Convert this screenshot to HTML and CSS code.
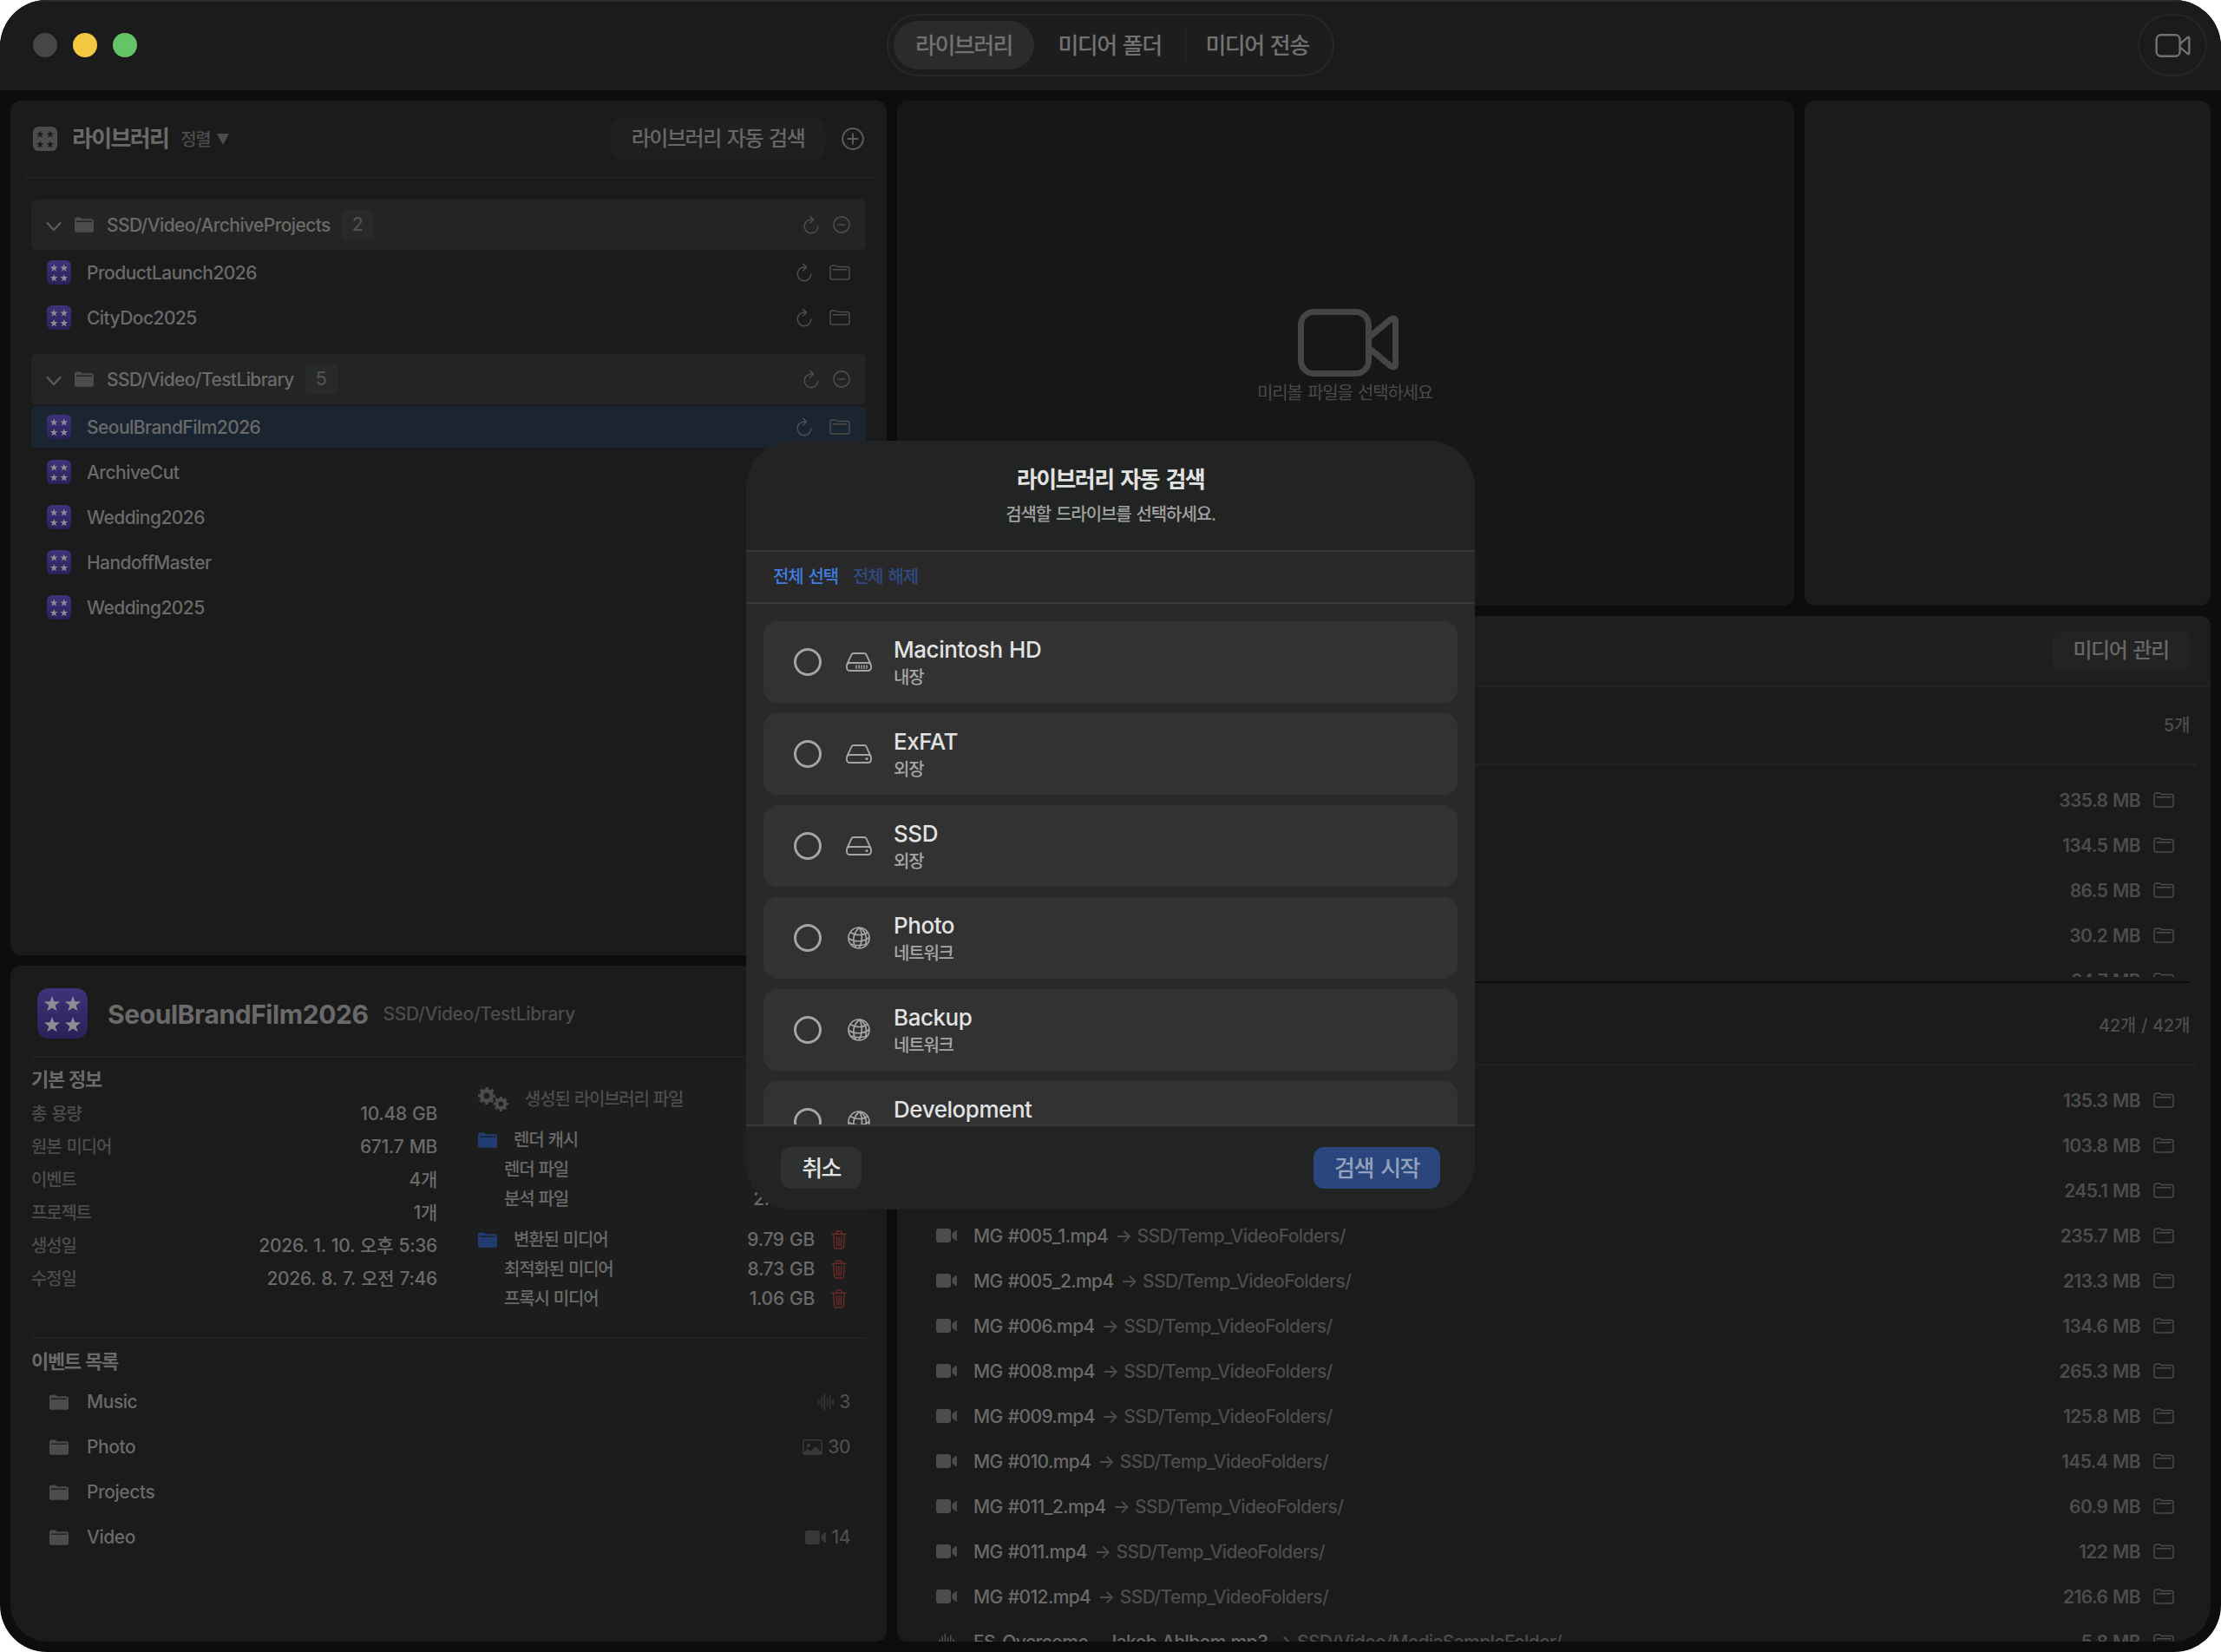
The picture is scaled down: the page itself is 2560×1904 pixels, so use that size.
FILE: index.html
```html
<!DOCTYPE html>
<html lang="ko">
<head>
    <meta charset="utf-8">
    <title>라이브러리</title>
    <link rel="stylesheet" href="styles.css">
</head>
<body>
    <svg class="sprite" aria-hidden="true">
        <linearGradient id="purple" x1="0" y1="0" x2="0" y2="1">
            <stop offset="0" stop-color="#40327a"/>
            <stop offset="1" stop-color="#2b2159"/>
        </linearGradient>
        <symbol id="star" viewBox="-10 -10 20 20">
            <path d="M0-9.5 2.29-3.16 9.04-2.94 3.71 1.21 5.58 7.69 0 3.9-5.58 7.69-3.71 1.21-9.04-2.94-2.29-3.16z"/>
        </symbol>
        <symbol id="library" viewBox="0 0 58 58">
            <rect class="tile" width="58" height="58" rx="13"/>
            <use href="#star" x="7" y="8.5" width="20" height="20"/>
            <use href="#star" x="31" y="8.5" width="20" height="20"/>
            <use href="#star" x="7" y="32.5" width="20" height="20"/>
            <use href="#star" x="31" y="32.5" width="20" height="20"/>
        </symbol>
        <symbol id="folder" viewBox="0 0 22 18">
            <path d="M0 3a2.6 2.6 0 0 1 2.6-2.6h4l2.2 1.8h10.600A2.600 2.600 0 0 1 22 4.800v10.400a2.600 2.600 0 0 1-2.600 2.600H2.600A2.600 2.600 0 0 1 0 15.200z" fill="currentColor"/>
            <path d="M2.500 5.200h17" stroke="#1b1b1b" stroke-width="1.300" stroke-linecap="round"/>
        </symbol>
        <symbol id="folder-line" viewBox="0 0 24 18">
            <path d="M1 3.400A2.400 2.400 0 0 1 3.400 1h4l2 1.600h11.200A2.400 2.400 0 0 1 23 5v9.600a2.400 2.400 0 0 1-2.400 2.400H3.400A2.400 2.400 0 0 1 1 14.600zM4 5.700h16" fill="none" stroke="currentColor" stroke-width="1.500" stroke-linecap="round"/>
        </symbol>
        <symbol id="refresh" viewBox="0 0 18 22">
            <path d="M10 5.100A7.800 7.800 0 1 0 16.800 13M7.600 1.200l3.900 3.900-3.900 3.900" fill="none" stroke="currentColor" stroke-width="1.600" stroke-linecap="round" stroke-linejoin="round"/>
        </symbol>
        <symbol id="minus" viewBox="0 0 20 20">
            <path d="M6 10h8" stroke="currentColor" stroke-width="1.600" stroke-linecap="round"/>
            <circle cx="10" cy="10" r="9.100" fill="none" stroke="currentColor" stroke-width="1.600"/>
        </symbol>
        <symbol id="plus" viewBox="0 0 26 26">
            <path d="M7.500 13h11M13 7.500v11" stroke="currentColor" stroke-width="2" stroke-linecap="round"/>
            <circle cx="13" cy="13" r="11.900" fill="none" stroke="currentColor" stroke-width="2"/>
        </symbol>
        <symbol id="chevron" viewBox="0 0 18 12">
            <path d="M1.500 2l7.500 8 7.500-8" fill="none" stroke="currentColor" stroke-width="2.200" stroke-linecap="round" stroke-linejoin="round"/>
        </symbol>
        <symbol id="camera-line" viewBox="0 0 116 78">
            <rect x="3.500" y="3.500" width="78" height="71" rx="15" fill="none" stroke="currentColor" stroke-width="7"/>
            <path d="M83 32l24-20q5-3 5.500 2v50q-.5 5-5.500 2L83 46" fill="none" stroke="currentColor" stroke-width="7" stroke-linejoin="round"/>
        </symbol>
        <symbol id="camera" viewBox="0 0 24 16">
            <rect width="17" height="16" rx="3" fill="currentColor"/>
            <path d="M18.500 5.500l4-3.300q1.500-.8 1.500.8v10q0 1.600-1.500.8l-4-3.300z" fill="currentColor"/>
        </symbol>
        <symbol id="wave" viewBox="0 0 18 20">
            <path d="M1 8v4M4.200 4.500v11M7.400 1v18M10.600 5.500v9M13.800 3v14M17 7.500v5" stroke="currentColor" stroke-width="1.500" stroke-linecap="round"/>
        </symbol>
        <symbol id="photo" viewBox="0 0 23 18">
            <rect x=".8" y=".8" width="21.400" height="16.400" rx="2.600" fill="none" stroke="currentColor" stroke-width="1.600"/>
            <circle cx="7" cy="7" r="2.200" fill="currentColor"/>
            <path d="M1 15l5-4 3.500 2.500 5.500-5.500 7.500 7v2H2z" fill="currentColor"/>
        </symbol>
        <symbol id="trash" viewBox="0 0 18 22">
            <path d="M1 4.200h16M6 4V2.200Q6 1 7.200 1h3.600Q12 1 12 2.200V4M2.700 4.500l.9 14.500q.2 2 2.200 2h6.400q2 0 2.200-2l.9-14.500M6.300 7.500l.4 10.500M9 7.500V18M11.700 7.500L11.300 18" fill="none" stroke="currentColor" stroke-width="1.400" stroke-linecap="round"/>
        </symbol>
        <symbol id="gears" viewBox="0 0 36 28">
            <g fill="none" stroke="currentColor">
                <circle cx="10" cy="10" r="5.700" stroke-width="4.600"/>
                <circle cx="10" cy="10" r="8.700" stroke-width="2.600" stroke-dasharray="3.416 3.416" stroke-dashoffset="1.708"/>
                <circle cx="26.300" cy="19.300" r="4.800" stroke-width="3.800"/>
                <circle cx="26.300" cy="19.300" r="7.400" stroke-width="2.400" stroke-dasharray="2.906 2.906" stroke-dashoffset="1.453"/>
            </g>
        </symbol>
        <symbol id="drive" viewBox="0 0 30 22">
            <path d="M1 14.500L6.300 2.800Q7.100 1 9 1h12q1.900 0 2.700 1.800L29 14.500M4.500 12h21a3.500 3.500 0 0 1 3.500 3.500v2a3.500 3.500 0 0 1-3.500 3.500h-21A3.500 3.500 0 0 1 1 17.500v-2A3.500 3.500 0 0 1 4.500 12z" fill="none" stroke="currentColor" stroke-width="1.900"/>
        </symbol>
        <symbol id="drive-internal" viewBox="0 0 30 22">
            <use href="#drive"/>
            <path d="M12 14.500v4.200M15 14.500v4.200M18 14.500v4.200M21 14.500v4.200M24 14.500v4.200" stroke="currentColor" stroke-width="1.500"/>
        </symbol>
        <symbol id="drive-external" viewBox="0 0 30 22">
            <use href="#drive"/>
            <circle cx="24" cy="16.500" r="1.600" fill="currentColor"/>
        </symbol>
        <symbol id="globe" viewBox="0 0 26 26">
            <g fill="none" stroke="currentColor" stroke-width="1.700">
                <circle cx="13" cy="13" r="12"/>
                <path d="M14 1C6 7 5 17 9.500 24.500M14 1c3 7 3.500 16-1 24M14 1c7 4 9 12 6.500 20.500M3 6.500c6 4 15 4 20 0M1 13.500c7 4.500 17 4.500 24-1M3.500 20c6 2 13 2 19 0"/>
            </g>
        </symbol>
    </svg>

    <div class="window">
        <header class="titlebar">
            <div class="lights">
                <span class="light"></span>
                <span class="light light-yellow"></span>
                <span class="light light-green"></span>
            </div>
            <nav class="tabs">
                <span class="tab tab-active">라이브러리</span>
                <span class="tab">미디어 폴더</span>
                <span class="tab tab-last">미디어 전송</span>
            </nav>
            <div class="camera-btn"><svg width="41" height="27"><use href="#camera-line"/></svg></div>
        </header>

        <main class="layout">
            <div class="column">
                <section class="panel libraries">
                    <div class="panel-head">
                        <svg class="tile-gray" width="28" height="28"><use href="#library"/></svg>
                        <h1>라이브러리</h1>
                        <span class="sort">정렬</span><span class="sort-arrow"></span>
                        <button class="btn scan-btn">라이브러리 자동 검색</button>
                        <svg class="add" width="26" height="26"><use href="#plus"/></svg>
                    </div>
                    <div class="groups">
                        <div class="group">
                            <div class="group-head">
                                <svg class="chevron" width="18" height="12"><use href="#chevron"/></svg>
                                <svg class="dim" width="22" height="18"><use href="#folder"/></svg>
                                <span class="group-name">SSD/Video/ArchiveProjects</span>
                                <span class="badge">2</span>
                                <span class="tools"><svg width="18" height="22"><use href="#refresh"/></svg><svg width="20" height="20"><use href="#minus"/></svg></span>
                            </div>
                            <div class="lib"><svg class="tile-purple" width="28" height="28"><use href="#library"/></svg><span class="lib-name">ProductLaunch2026</span><span class="tools"><svg width="18" height="22"><use href="#refresh"/></svg><svg width="24" height="18"><use href="#folder-line"/></svg></span></div>
                            <div class="lib"><svg class="tile-purple" width="28" height="28"><use href="#library"/></svg><span class="lib-name">CityDoc2025</span><span class="tools"><svg width="18" height="22"><use href="#refresh"/></svg><svg width="24" height="18"><use href="#folder-line"/></svg></span></div>
                        </div>
                        <div class="group">
                            <div class="group-head">
                                <svg class="chevron" width="18" height="12"><use href="#chevron"/></svg>
                                <svg class="dim" width="22" height="18"><use href="#folder"/></svg>
                                <span class="group-name">SSD/Video/TestLibrary</span>
                                <span class="badge">5</span>
                                <span class="tools"><svg width="18" height="22"><use href="#refresh"/></svg><svg width="20" height="20"><use href="#minus"/></svg></span>
                            </div>
                            <div class="lib lib-selected"><svg class="tile-purple" width="28" height="28"><use href="#library"/></svg><span class="lib-name">SeoulBrandFilm2026</span><span class="tools"><svg width="18" height="22"><use href="#refresh"/></svg><svg width="24" height="18"><use href="#folder-line"/></svg></span></div>
                            <div class="lib"><svg class="tile-purple" width="28" height="28"><use href="#library"/></svg><span class="lib-name">ArchiveCut</span></div>
                            <div class="lib"><svg class="tile-purple" width="28" height="28"><use href="#library"/></svg><span class="lib-name">Wedding2026</span></div>
                            <div class="lib"><svg class="tile-purple" width="28" height="28"><use href="#library"/></svg><span class="lib-name">HandoffMaster</span></div>
                            <div class="lib"><svg class="tile-purple" width="28" height="28"><use href="#library"/></svg><span class="lib-name">Wedding2025</span></div>
                        </div>
                    </div>
                </section>

                <section class="panel details">
                    <div class="details-head">
                        <svg class="tile-purple" width="58" height="58"><use href="#library"/></svg>
                        <h2>SeoulBrandFilm2026</h2>
                        <span class="details-path">SSD/Video/TestLibrary</span>
                    </div>
                    <div class="details-body">
                        <div class="info">
                            <h3>기본 정보</h3>
                            <dl>
                                <div><dt>총 용량</dt><dd>10.48 GB</dd></div>
                                <div><dt>원본 미디어</dt><dd>671.7 MB</dd></div>
                                <div><dt>이벤트</dt><dd>4개</dd></div>
                                <div><dt>프로젝트</dt><dd>1개</dd></div>
                                <div><dt>생성일</dt><dd>2026. 1. 10. 오후 5:36</dd></div>
                                <div><dt>수정일</dt><dd>2026. 8. 7. 오전 7:46</dd></div>
                            </dl>
                        </div>
                        <div class="generated">
                            <div class="generated-head"><svg width="36" height="28"><use href="#gears"/></svg><span>생성된 라이브러리 파일</span></div>
                            <div class="gen-block">
                                <div class="gen gen-top"><svg class="blue" width="22" height="18"><use href="#folder"/></svg><span>렌더 캐시</span></div>
                                <div class="gen"><span>렌더 파일</span></div>
                                <div class="gen"><span>분석 파일</span><b>2.4 MB</b><svg class="red" width="18" height="22"><use href="#trash"/></svg></div>
                            </div>
                            <div class="gen-block">
                                <div class="gen gen-top"><svg class="blue" width="22" height="18"><use href="#folder"/></svg><span>변환된 미디어</span><b>9.79 GB</b><svg class="red" width="18" height="22"><use href="#trash"/></svg></div>
                                <div class="gen"><span>최적화된 미디어</span><b>8.73 GB</b><svg class="red" width="18" height="22"><use href="#trash"/></svg></div>
                                <div class="gen"><span>프록시 미디어</span><b>1.06 GB</b><svg class="red" width="18" height="22"><use href="#trash"/></svg></div>
                            </div>
                        </div>
                    </div>
                    <div class="events">
                        <h3>이벤트 목록</h3>
                        <div class="event"><svg class="dim" width="22" height="18"><use href="#folder"/></svg><span>Music</span><span class="count"><svg width="18" height="20"><use href="#wave"/></svg>3</span></div>
                        <div class="event"><svg class="dim" width="22" height="18"><use href="#folder"/></svg><span>Photo</span><span class="count"><svg width="23" height="18"><use href="#photo"/></svg>30</span></div>
                        <div class="event"><svg class="dim" width="22" height="18"><use href="#folder"/></svg><span>Projects</span></div>
                        <div class="event"><svg class="dim" width="22" height="18"><use href="#folder"/></svg><span>Video</span><span class="count"><svg width="24" height="16"><use href="#camera"/></svg>14</span></div>
                    </div>
                </section>
            </div>

            <div class="column">
                <div class="top-row">
                    <section class="panel preview">
                        <svg width="116" height="78"><use href="#camera-line"/></svg>
                        <p>미리볼 파일을 선택하세요</p>
                    </section>
                    <section class="panel inspector"></section>
                </div>

                <section class="panel media">
                    <div class="media-head"><button class="btn manage-btn">미디어 관리</button></div>
                    <div class="section-head">5개</div>
                    <div class="files files-top">
                        <div class="file"><span class="size">335.8 MB</span><svg width="24" height="18"><use href="#folder-line"/></svg></div>
                        <div class="file"><span class="size">134.5 MB</span><svg width="24" height="18"><use href="#folder-line"/></svg></div>
                        <div class="file"><span class="size">86.5 MB</span><svg width="24" height="18"><use href="#folder-line"/></svg></div>
                        <div class="file"><span class="size">30.2 MB</span><svg width="24" height="18"><use href="#folder-line"/></svg></div>
                        <div class="file"><span class="size">24.7 MB</span><svg width="24" height="18"><use href="#folder-line"/></svg></div>
                    </div>
                    <div class="splitter"></div>
                    <div class="section-head section-head-linked">42개 / 42개</div>
                    <div class="files">
                        <div class="file"><span class="size">135.3 MB</span><svg width="24" height="18"><use href="#folder-line"/></svg></div>
                        <div class="file"><span class="size">103.8 MB</span><svg width="24" height="18"><use href="#folder-line"/></svg></div>
                        <div class="file"><span class="size">245.1 MB</span><svg width="24" height="18"><use href="#folder-line"/></svg></div>
                        <div class="file"><svg class="kind" width="24" height="16"><use href="#camera"/></svg><span class="name">MG #005_1.mp4</span><span class="path">→ SSD/Temp_VideoFolders/</span><span class="size">235.7 MB</span><svg width="24" height="18"><use href="#folder-line"/></svg></div>
                        <div class="file"><svg class="kind" width="24" height="16"><use href="#camera"/></svg><span class="name">MG #005_2.mp4</span><span class="path">→ SSD/Temp_VideoFolders/</span><span class="size">213.3 MB</span><svg width="24" height="18"><use href="#folder-line"/></svg></div>
                        <div class="file"><svg class="kind" width="24" height="16"><use href="#camera"/></svg><span class="name">MG #006.mp4</span><span class="path">→ SSD/Temp_VideoFolders/</span><span class="size">134.6 MB</span><svg width="24" height="18"><use href="#folder-line"/></svg></div>
                        <div class="file"><svg class="kind" width="24" height="16"><use href="#camera"/></svg><span class="name">MG #008.mp4</span><span class="path">→ SSD/Temp_VideoFolders/</span><span class="size">265.3 MB</span><svg width="24" height="18"><use href="#folder-line"/></svg></div>
                        <div class="file"><svg class="kind" width="24" height="16"><use href="#camera"/></svg><span class="name">MG #009.mp4</span><span class="path">→ SSD/Temp_VideoFolders/</span><span class="size">125.8 MB</span><svg width="24" height="18"><use href="#folder-line"/></svg></div>
                        <div class="file"><svg class="kind" width="24" height="16"><use href="#camera"/></svg><span class="name">MG #010.mp4</span><span class="path">→ SSD/Temp_VideoFolders/</span><span class="size">145.4 MB</span><svg width="24" height="18"><use href="#folder-line"/></svg></div>
                        <div class="file"><svg class="kind" width="24" height="16"><use href="#camera"/></svg><span class="name">MG #011_2.mp4</span><span class="path">→ SSD/Temp_VideoFolders/</span><span class="size">60.9 MB</span><svg width="24" height="18"><use href="#folder-line"/></svg></div>
                        <div class="file"><svg class="kind" width="24" height="16"><use href="#camera"/></svg><span class="name">MG #011.mp4</span><span class="path">→ SSD/Temp_VideoFolders/</span><span class="size">122 MB</span><svg width="24" height="18"><use href="#folder-line"/></svg></div>
                        <div class="file"><svg class="kind" width="24" height="16"><use href="#camera"/></svg><span class="name">MG #012.mp4</span><span class="path">→ SSD/Temp_VideoFolders/</span><span class="size">216.6 MB</span><svg width="24" height="18"><use href="#folder-line"/></svg></div>
                        <div class="file"><svg class="kind" width="24" height="20"><use href="#wave"/></svg><span class="name">ES_Overcome - Jakob Ahlbom.mp3</span><span class="path">→ SSD/Video/MediaSampleFolder/</span><span class="size">5.8 MB</span><svg width="24" height="18"><use href="#folder-line"/></svg></div>
                    </div>
                </section>
            </div>
        </main>

        <div class="modal" role="dialog" aria-labelledby="modal-title">
            <div class="modal-head">
                <h2 id="modal-title">라이브러리 자동 검색</h2>
                <p>검색할 드라이브를 선택하세요.</p>
            </div>
            <div class="modal-links"><a>전체 선택</a><a class="off">전체 해제</a></div>
            <div class="drives">
                <div class="drive"><span class="radio"></span><svg width="30" height="22"><use href="#drive-internal"/></svg><div><strong>Macintosh HD</strong><small>내장</small></div></div>
                <div class="drive"><span class="radio"></span><svg width="30" height="22"><use href="#drive-external"/></svg><div><strong>ExFAT</strong><small>외장</small></div></div>
                <div class="drive"><span class="radio"></span><svg width="30" height="22"><use href="#drive-external"/></svg><div><strong>SSD</strong><small>외장</small></div></div>
                <div class="drive"><span class="radio"></span><svg width="30" height="26"><use href="#globe"/></svg><div><strong>Photo</strong><small>네트워크</small></div></div>
                <div class="drive"><span class="radio"></span><svg width="30" height="26"><use href="#globe"/></svg><div><strong>Backup</strong><small>네트워크</small></div></div>
                <div class="drive"><span class="radio"></span><svg width="30" height="26"><use href="#globe"/></svg><div><strong>Development</strong><small>네트워크</small></div></div>
            </div>
            <div class="modal-foot">
                <button class="modal-btn">취소</button>
                <button class="modal-btn modal-btn-primary">검색 시작</button>
            </div>
        </div>
    </div>
</body>
</html>
```

FILE: styles.css
```css
* {
    box-sizing: border-box;
    margin: 0;
    padding: 0;
}
body {
    background: #fff;
    color: #6a6a6a;
    font-family: Inter, 'Noto Sans CJK KR', sans-serif;
    font-size: 21px;
    font-weight: 500;
    line-height: 1.2;
    word-spacing: 1px;
}
svg {
    display: block;
    flex: none;
}
span, b, h1, h2, h3, a {
    white-space: nowrap;
}
.sprite {
    position: absolute;
    width: 0;
    height: 0;
}
button {
    font: inherit;
    color: inherit;
    border: none;
}
.window {
    position: relative;
    display: flex;
    flex-direction: column;
    width: 2560px;
    height: 1904px;
    background: #0d0d0d;
    border-radius: 54px;
    overflow: hidden;
}

/* Title bar */
.titlebar {
    display: grid;
    grid-template-columns: 1fr auto 1fr;
    align-items: center;
    height: 104px;
    padding: 0 16px 2px 38px;
    background: #1b1b1b;
    border-top: 2px solid #2a2a2a;
}
.lights {
    display: flex;
    gap: 18px;
}
.light {
    width: 28px;
    height: 28px;
    border-radius: 50%;
    background: #474747;
}
.light-yellow {
    background: #f3c944;
}
.light-green {
    background: #65c466;
}
.tabs {
    display: flex;
    align-items: center;
    width: 516px;
    height: 72px;
    margin-left: -22px;
    padding: 0 6px;
    background: #1d1d1d;
    border: 2px solid #272727;
    border-radius: 36px;
    font-size: 26px;
    letter-spacing: -.06em;
    word-spacing: 2px;
    color: #717171;
}
.tab {
    display: flex;
    align-items: center;
    justify-content: center;
    width: 174px;
    height: 40px;
    padding-top: 1px;
}
.tab-active {
    width: 162px;
    height: 56px;
    border-radius: 28px;
    background: #2b2b2b;
}
.tab-last {
    flex: 1;
    border-left: 2px solid #242424;
}
.camera-btn {
    display: flex;
    align-items: center;
    justify-content: center;
    justify-self: end;
    width: 80px;
    height: 72px;
    border: 2px solid #242526;
    border-radius: 38px;
    color: #717171;
}

/* Panels */
.layout {
    flex: 1;
    display: grid;
    grid-template-columns: 1010px 1514px;
    gap: 12px;
    padding: 12px;
    min-height: 0;
}
.column {
    display: flex;
    flex-direction: column;
    gap: 12px;
    min-height: 0;
}
.panel {
    background: #1b1b1b;
    border-radius: 12px;
    overflow: hidden;
}
.libraries {
    height: 985px;
}
.details {
    flex: 1;
    padding: 0 24px;
    border-bottom-left-radius: 42px;
}
.btn {
    display: flex;
    align-items: center;
    justify-content: center;
    height: 46px;
    padding-top: 1px;
    border-radius: 12px;
    font-size: 24px;
    letter-spacing: -.06em;
    word-spacing: 2px;
    color: #676767;
}

/* Library list */
.panel-head {
    display: flex;
    align-items: center;
    height: 90px;
    margin: 0 16px;
    padding: 0 10px;
    border-bottom: 2px solid #222;
}
h1 {
    margin-left: 17px;
    font-size: 26px;
    font-weight: 700;
    letter-spacing: -.065em;
    color: #6a6a6a;
}
.sort {
    margin: 2px 7px 0 14px;
    font-size: 20px;
    letter-spacing: -.06em;
    color: #4c4c4c;
}
.sort-arrow {
    border: 7px solid transparent;
    border-top: 13px solid #4c4c4c;
    border-bottom: 0;
}
.scan-btn {
    width: 247px;
    margin-left: auto;
    background: #1f1f1f;
}
.add {
    margin-left: 19px;
    color: #5c5c5c;
}
.tile-gray {
    --tile: #4c4c4c;
    fill: #1b1b1b;
}
.tile-purple {
    --tile: url(#purple);
    fill: #8f8d94;
}
.tile {
    fill: var(--tile);
}
.groups {
    display: flex;
    flex-direction: column;
    gap: 18px;
    padding: 24px;
}
.group {
    display: flex;
    flex-direction: column;
    gap: 4px;
}
.group-head {
    display: flex;
    align-items: center;
    height: 58px;
    margin-bottom: -2px;
    padding: 0 18px 0 17px;
    background: #242424;
    border-radius: 6px;
}
.chevron {
    margin: 4px 15px 0 0;
    color: #5c5c5c;
}
.dim {
    color: #4c4c4c;
}
.group-name {
    margin-left: 15px;
    padding-top: 1px;
    letter-spacing: -.62px;
}
.badge {
    width: 37px;
    margin-left: 13px;
    border-radius: 4px;
    background: #272a29;
    line-height: 34px;
    text-align: center;
    color: #505050;
}
.tools {
    display: flex;
    align-items: center;
    gap: 16px;
    margin-left: auto;
    color: #4c4c4c;
}
.lib {
    display: flex;
    align-items: center;
    gap: 18px;
    height: 48px;
    padding: 0 18px;
    border-radius: 6px;
    letter-spacing: -.55px;
}
.lib-name {
    padding-top: 1px;
}
.lib .tools {
    gap: 20px;
}
.lib-selected {
    background: #1b2531;
}

/* Library details */
.details-head {
    display: flex;
    align-items: center;
    height: 106px;
    padding: 5px 7px 0;
    border-bottom: 2px solid #222;
}
.details-head h2 {
    margin: 2px 17px 0 23px;
    font-size: 30px;
    font-weight: 700;
    letter-spacing: -.42px;
}
.details-path {
    margin-top: 2px;
    letter-spacing: -.35px;
    color: #4c4c4c;
}
.details-body {
    display: flex;
    justify-content: space-between;
    height: 324px;
    padding-top: 11px;
    border-bottom: 2px solid #222;
}
.info {
    width: 468px;
}
h3 {
    height: 28px;
    font-size: 22px;
    font-weight: 600;
    line-height: 28px;
    letter-spacing: -.06em;
    word-spacing: 1px;
    color: #6a6a6a;
}
dl {
    padding-top: 7px;
}
dl div {
    display: flex;
    justify-content: space-between;
    align-items: center;
    height: 38px;
}
dt {
    font-size: 20px;
    letter-spacing: -.06em;
    word-spacing: 2px;
    color: #4c4c4c;
}
dd {
    letter-spacing: -.3px;
}
.generated {
    display: flex;
    flex-direction: column;
    gap: 13px;
    width: 469px;
    height: 298px;
    padding: 20px 22px 0;
    border-radius: 10px;
    background: #1d1d1d;
    font-size: 20px;
    letter-spacing: -.06em;
    word-spacing: 1px;
}
.generated-head {
    display: flex;
    align-items: center;
    gap: 18px;
    height: 34px;
    color: #4c4c4c;
}
.gen {
    display: flex;
    align-items: center;
    height: 34px;
    padding-left: 30px;
}
.gen-top {
    gap: 19px;
    padding-left: 0;
}
.gen b {
    margin-left: auto;
    font-size: 21px;
    font-weight: 500;
    letter-spacing: -.3px;
}
.gen-top .red {
    margin-left: 0;
}
.blue {
    color: #223c72;
}
.red {
    margin-left: 19px;
    color: #6b2b28;
}
.events {
    padding-top: 12px;
}
.event {
    display: flex;
    align-items: center;
    height: 52px;
    padding: 1px 18px 0 21px;
    letter-spacing: -.45px;
}
.events h3 + .event {
    margin-top: 6px;
}
.event .dim {
    margin-right: 21px;
}
.count {
    display: flex;
    align-items: center;
    gap: 6px;
    margin-left: auto;
    color: #4c4c4c;
}
.count svg {
    color: #383838;
}

/* Preview */
.top-row {
    display: flex;
    gap: 12px;
    height: 582px;
}
.preview {
    display: flex;
    flex-direction: column;
    align-items: center;
    justify-content: center;
    gap: 7px;
    width: 1034px;
    padding-top: 6px;
    background: #171717;
    color: #454547;
}
.preview svg {
    margin-left: 6px;
}
.preview p {
    margin-right: 2px;
    font-size: 20px;
    font-weight: 400;
    letter-spacing: -.06em;
    word-spacing: 2px;
    color: #4a4a4a;
}
.inspector {
    flex: 1;
}

/* Media */
.media {
    flex: 1;
    display: flex;
    flex-direction: column;
    min-height: 0;
    border-bottom-right-radius: 42px;
}
.media-head {
    display: flex;
    align-items: center;
    justify-content: flex-end;
    height: 82px;
    padding-right: 24px;
    background: #1e1e1e;
    border-bottom: 2px solid #232323;
}
.manage-btn {
    width: 159px;
    background: #232323;
}
.section-head {
    display: flex;
    align-items: center;
    justify-content: flex-end;
    flex: none;
    height: 90px;
    margin: 0 16px;
    padding-right: 8px;
    border-bottom: 2px solid #222;
    font-size: 20px;
    letter-spacing: -.3px;
    color: #4c4c4c;
}
.section-head-linked {
    height: 95px;
    padding-top: 4px;
}
.files {
    flex: 1;
    min-height: 0;
    padding: 14px 42px 0 45px;
    overflow: hidden;
}
.files-top {
    flex: none;
    height: 244px;
}
.splitter {
    flex: none;
    height: 2px;
    margin: 5px 24px 0;
    background: #0c0c0c;
}
.file {
    display: flex;
    align-items: center;
    height: 52px;
    color: #4c4c4c;
}
.kind {
    margin-right: 19px;
}
.name, .path, .size {
    padding-top: 1px;
}
.name {
    margin-right: 8px;
    letter-spacing: -.6px;
    color: #6a6a6a;
}
.path {
    letter-spacing: -.6px;
}
.size {
    margin: 0 15px 0 auto;
    font-weight: 600;
    letter-spacing: -.6px;
}

/* Drive picker */
.modal {
    position: absolute;
    left: 860px;
    top: 508px;
    display: flex;
    flex-direction: column;
    width: 840px;
    height: 886px;
    border-radius: 54px;
    background: #292929;
    overflow: hidden;
}
.modal-head {
    height: 128px;
    padding-top: 29px;
    background: #222423;
    border-bottom: 2px solid #383a39;
    text-align: center;
}
.modal-head h2 {
    font-size: 26px;
    font-weight: 700;
    line-height: 32px;
    letter-spacing: -.06em;
    word-spacing: 3px;
    color: #e2e2e2;
}
.modal-head p {
    margin-top: 10px;
    font-size: 20px;
    line-height: 28px;
    letter-spacing: -.057em;
    word-spacing: 2px;
    color: #a0a1a0;
}
.modal-links {
    display: flex;
    align-items: center;
    gap: 17px;
    height: 60px;
    padding: 0 31px;
    border-bottom: 2px solid #383838;
    font-size: 20px;
    letter-spacing: -.06em;
    word-spacing: 2px;
    color: #3f7de0;
}
.off {
    color: #2e4c82;
}
.drives {
    display: flex;
    flex-direction: column;
    gap: 12px;
    height: 600px;
    padding: 20px 20px 0;
    overflow: hidden;
}
.drive {
    display: flex;
    align-items: center;
    flex: none;
    height: 94px;
    padding-left: 35px;
    border-radius: 16px;
    background: #323232;
    color: #a5a5a5;
}
.radio {
    width: 32px;
    height: 32px;
    margin-right: 28px;
    border: 3px solid #a5a5a5;
    border-radius: 50%;
}
.drive svg {
    margin-right: 25px;
}
.drive div {
    padding-top: 4px;
}
.drive strong {
    display: block;
    font-size: 26px;
    font-weight: 500;
    line-height: 32px;
    letter-spacing: -.45px;
    color: #e2e2e2;
}
.drive small {
    display: block;
    font-size: 20px;
    line-height: 32px;
    letter-spacing: -.06em;
}
.modal-foot {
    display: flex;
    align-items: center;
    justify-content: space-between;
    flex: 1;
    padding: 0 40px;
    background: #222423;
    border-top: 2px solid #383a39;
}
.modal-btn {
    width: 93px;
    height: 48px;
    padding-top: 2px;
    border-radius: 12px;
    background: #2f3130;
    font-size: 26px;
    letter-spacing: -.06em;
    word-spacing: 3px;
    color: #e2e2e2;
}
.modal-btn-primary {
    width: 146px;
    background: #2b467c;
    color: #93a1bb;
}
```
